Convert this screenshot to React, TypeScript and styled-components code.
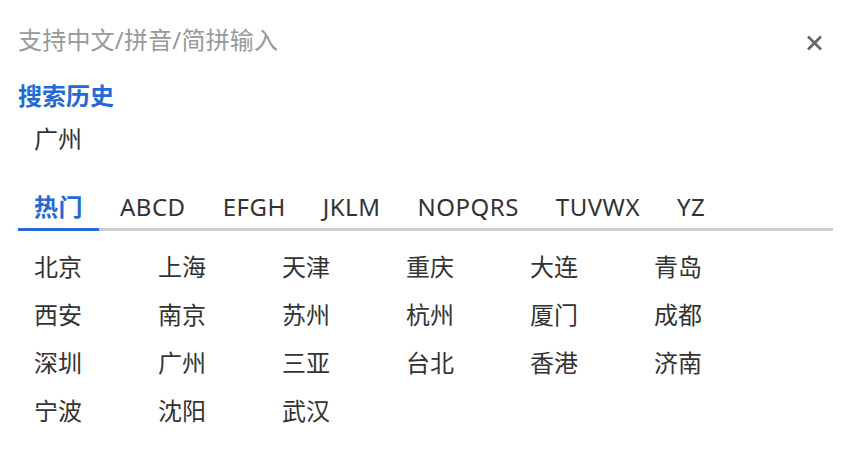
import React, { useState } from "react";
import styled, { createGlobalStyle } from "styled-components";

const Global = createGlobalStyle`
  html, body { margin: 0; padding: 0; background: #fff; }
  body {
    font-family: "Noto Sans", "Noto Sans CJK SC", sans-serif;
    color: #333;
  }
`;

const Panel = styled.div`
  width: 852px;
  height: 462px;
  box-sizing: border-box;
  padding: 0 19px 0 18px;
  background: #fff;
`;

const SearchRow = styled.div`
  height: 80px;
  display: flex;
  align-items: center;
  justify-content: space-between;
`;

const SearchInput = styled.input`
  flex: 1;
  border: none;
  outline: none;
  padding: 0;
  background: transparent;
  font-family: "Noto Sans", "Noto Sans CJK SC", sans-serif;
  font-size: 24px;
  line-height: 32px;
  letter-spacing: 0.2px;
  color: #333;
  &::placeholder { color: #999; }
`;

const CloseButton = styled.button`
  width: 24px;
  height: 24px;
  margin-right: 7px;
  padding: 0;
  border: none;
  background: transparent;
  display: flex;
  align-items: center;
  justify-content: center;
  cursor: pointer;
  margin-top: 6px;
`;

const SectionTitle = styled.div`
  font-size: 24px;
  line-height: 32px;
  font-weight: 700;
  color: #2469d6;
`;

const HistoryList = styled.div`
  display: flex;
  gap: 24px;
  padding: 11px 0 0 16px;
`;

const HistoryItem = styled.span`
  font-size: 24px;
  line-height: 32px;
  color: #333;
`;

const Tabs = styled.div`
  display: flex;
  gap: 5px;
  margin-top: 35px;
  border-bottom: 3px solid #cccccc;
`;

const Tab = styled.div<{ $active?: boolean }>`
  padding: 0 16px 4px;
  margin-bottom: -3px;
  font-size: 24px;
  line-height: 34px;
  letter-spacing: 0.5px;
  color: ${(p) => (p.$active ? "#2469d6" : "#333")};
  font-weight: ${(p) => (p.$active ? 700 : 400)};
  border-bottom: 3px solid ${(p) => (p.$active ? "#2469d6" : "transparent")};
  cursor: pointer;
`;

const CityGrid = styled.div`
  display: grid;
  grid-template-columns: repeat(6, 124px);
  padding: 12px 0 0 16px;
`;

const City = styled.div`
  font-size: 24px;
  line-height: 48px;
  color: #333;
`;

const tabs = ["热门", "ABCD", "EFGH", "JKLM", "NOPQRS", "TUVWX", "YZ"];
const cities = [
  "北京", "上海", "天津", "重庆", "大连", "青岛",
  "西安", "南京", "苏州", "杭州", "厦门", "成都",
  "深圳", "广州", "三亚", "台北", "香港", "济南",
  "宁波", "沈阳", "武汉",
];

export default function App() {
  const [active, setActive] = useState(0);
  return (
    <>
      <Global />
      <Panel>
        <SearchRow>
          <SearchInput placeholder="支持中文/拼音/简拼输入" />
          <CloseButton aria-label="关闭">
            <svg width="17" height="16" viewBox="0 0 17 16">
              <path d="M2 1.5 L15 14.5 M15 1.5 L2 14.5" stroke="#666" strokeWidth="2.6" strokeLinecap="butt" />
            </svg>
          </CloseButton>
        </SearchRow>
        <SectionTitle>搜索历史</SectionTitle>
        <HistoryList>
          <HistoryItem>广州</HistoryItem>
        </HistoryList>
        <Tabs>
          {tabs.map((t, i) => (
            <Tab key={t} $active={i === active} onClick={() => setActive(i)}>
              {t}
            </Tab>
          ))}
        </Tabs>
        <CityGrid>
          {cities.map((c) => (
            <City key={c}>{c}</City>
          ))}
        </CityGrid>
      </Panel>
    </>
  );
}
